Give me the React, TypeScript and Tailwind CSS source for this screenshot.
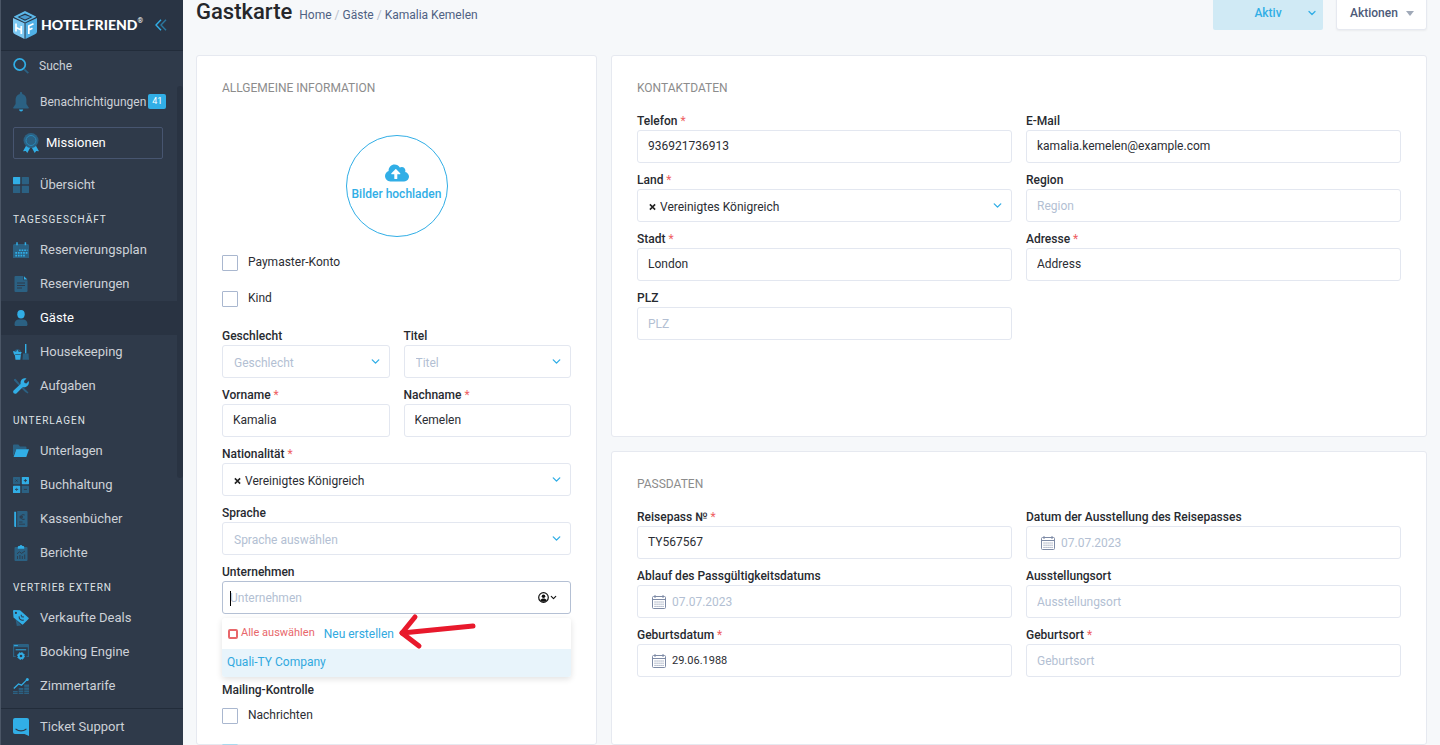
import { useState } from 'react'
import type { ReactNode } from 'react'
import { ChevronDown } from 'lucide-react'
import { FaCloudUploadAlt } from 'react-icons/fa'

const BRIGHT = '#31aee6'
const DULL = '#2b6183'
const DARK = '#2f3a4a'

const Svg = ({ children, size = 16 }: { children: ReactNode; size?: number }) => (
  <svg width={size} height={size} viewBox="0 0 16 16" fill="none" className="shrink-0" aria-hidden="true">
    {children}
  </svg>
)

const icons = {
  search: (
    <Svg>
      <path d="M11.3 11.3l4 3.9" stroke={DULL} strokeWidth="1.8" />
      <circle cx="6.7" cy="6.5" r="5.6" stroke={BRIGHT} strokeWidth="1.7" />
    </Svg>
  ),
  grid: (
    <Svg>
      <rect x="0" y="0" width="7.2" height="7.2" rx=".6" fill={BRIGHT} />
      <rect x="8.8" y="0" width="7.2" height="7.2" rx=".6" fill={DULL} />
      <rect x="0" y="8.8" width="7.2" height="7.2" rx=".6" fill={DULL} />
      <rect x="8.8" y="8.8" width="7.2" height="7.2" rx=".6" fill={DULL} />
    </Svg>
  ),
  calendar: (
    <Svg>
      <path d="M0 3.5a1.500 1.500 0 011.500-1.500h13a1.500 1.500 0 011.500 1.500V16H0z" fill={DULL} />
      <path d="M4 .3v3M12.400 .3v3" stroke={BRIGHT} strokeWidth="1.500" />
      <path d="M6 8.200h8.500M2.300 10.900h12.200M2.300 13.600h9.500" stroke={BRIGHT} strokeWidth="1.600" strokeDasharray="1.700 .9" />
    </Svg>
  ),
  file: (
    <Svg>
      <path d="M1.500 1a1 1 0 011-1h7.800v4.200h4.200V15a1 1 0 01-1 1h-11a1 1 0 01-1-1z" fill={DULL} />
      <path d="M11 .3l3.300 3.300H11z" fill={BRIGHT} />
      <path d="M4 7h8M4 9.500h8M4 12h5" stroke={DARK} strokeWidth="1" />
    </Svg>
  ),
  user: (
    <Svg>
      <path d="M1.500 14.500c0-3.300 1.900-5 4.200-5h4.600c2.300 0 4.200 1.700 4.200 5 0 .8-.5 1.500-1.300 1.500H2.800c-.8 0-1.300-.7-1.300-1.500z" fill={DULL} />
      <ellipse cx="8" cy="4.200" rx="3.700" ry="4.200" fill={BRIGHT} />
    </Svg>
  ),
  cleaning: (
    <Svg>
      <path d="M12.700 0v9.500" stroke={BRIGHT} strokeWidth="1.400" />
      <path d="M10 9.500h5.500l.5 6.200H9.500z" fill={DULL} />
      <path d="M1.500 8.800a3 3 0 016 0" stroke={DULL} strokeWidth="1.200" />
      <path d="M0 7l3 .8 1.300-2 1.600 2.100L8.700 8 8 9.800l-.7 6H2.500l-.6-4.600C.9 10.500.300 8.700 0 7z" fill={BRIGHT} />
      <path d="M2.200 10.500h5.500" stroke={DARK} strokeWidth=".6" />
    </Svg>
  ),
  tools: (
    <Svg>
      <path d="M1 1.300l1.500-.5 5 6 6.800 6.500 1.200 1.400-.8.8-2.500-1.500L1 2.500z" fill={DULL} />
      <path d="M.6 12.600l7-6.500C7 3.300 8.600.600 11.300.300c.9-.1 1.500 0 2.200.300L11 3.100l.5 1.900 1.900.5 2.300-2.400c.8 2.500-.7 5-3 5.800-1 .3-1.900.3-2.800 0L3.400 15.400c-1.900 1.500-4.300-1-2.800-2.800z" fill={BRIGHT} />
    </Svg>
  ),
  folder: (
    <Svg>
      <path d="M0 2.500a1 1 0 011-1h4.400l1.600 2h5.500a1 1 0 011 1V7H3L0 13z" fill={DULL} />
      <path d="M3.300 6.200H16l-2.700 7.800H.6z" fill={BRIGHT} />
    </Svg>
  ),
  calc: (
    <Svg>
      <rect width="7.200" height="7.200" rx=".6" fill={DULL} />
      <rect x="8.800" width="7.200" height="7.200" rx=".6" fill={BRIGHT} />
      <rect y="8.800" width="7.200" height="7.200" rx=".6" fill={BRIGHT} />
      <rect x="8.800" y="8.800" width="7.200" height="7.200" rx=".6" fill={DULL} />
      <path d="M2.600 2.600l2 2m0-2l-2 2M12.400 2v3.200M10.800 3.600H14M2 12.400h3.200M3.600 10.900v.7M3.600 13.200v.7M10.900 12.400H14" stroke={DARK} strokeWidth=".9" />
    </Svg>
  ),
  cashbook: (
    <Svg>
      <path d="M4.200 0h9.300a1 1 0 011 1v14a1 1 0 01-1 1H4.200z" fill={DULL} />
      <path d="M1.200.8h1.900V16H2.200a1 1 0 01-1-1z" fill={BRIGHT} />
      <path d="M11.700 4c-2.800-1-4 .4-4 2s1.200 3 4 2.200M6.500 5.400H10M6.500 6.700H10M6 11h3.500M6 13.200h6" stroke={DARK} strokeWidth=".9" />
    </Svg>
  ),
  report: (
    <Svg>
      <path d="M1.500 3a1 1 0 011-1h11a1 1 0 011 1v12a1 1 0 01-1 1h-11a1 1 0 01-1-1z" fill={DULL} />
      <path d="M4.800 3.700V2a1 1 0 011-1h.8a1.500 1.500 0 012.800 0h.8a1 1 0 011 1v1.700z" fill={BRIGHT} />
      <path d="M4 8.800l2.500-2 2 1.600L12 6M4.500 11v3M6.900 10v4M9.300 11v3M11.700 9.500V14" stroke={DARK} strokeWidth=".9" />
    </Svg>
  ),
  deals: (
    <Svg>
      <path d="M2.500 9L3.800 16l4.500-.5z" fill={DULL} />
      <path d="M0 1a1 1 0 011-1l6 .3 8.500 7.500a1 1 0 010 1.300l-5.300 5.200a1 1 0 01-1.400 0L.5 7.500z" fill={BRIGHT} />
      <circle cx="2.900" cy="2.900" r="1.100" fill={DARK} />
      <path d="M6.200 6.300c-.4 2.500 1.400 4.300 4.500 3.800M8.300 4.800v1.500M8.300 6.700l2.600.3" stroke={DARK} strokeWidth="1.100" />
    </Svg>
  ),
  engine: (
    <Svg>
      <path d="M0 1a1 1 0 011-1h14a1 1 0 011 1v12h-2.500V12h1.300V3.200H1.200V12h1.500v1H0z" fill={DULL} />
      <path d="M1.500 1.600h3M3 5.800h9.800" stroke={BRIGHT} strokeWidth="1" strokeLinecap="round" />
      <circle cx="8" cy="12" r="2.300" stroke={BRIGHT} strokeWidth="1.900" />
      <circle cx="8" cy="12" r="3.500" stroke={BRIGHT} strokeWidth="1" strokeDasharray="1.400 1.350" />
    </Svg>
  ),
  rates: (
    <Svg>
      <path d="M0 13h4.700v3H0zM5.700 10h4.600v6H5.700zM11.200 6.500H16V16h-4.800z" fill={DULL} />
      <path d="M0 14.500h16M5.700 12.300H16M11 9.300h5" stroke={DARK} strokeWidth=".6" />
      <path d="M.8 10.500L5.500 6l3 1.200L14 1.600" stroke={BRIGHT} strokeWidth="1.300" />
      <circle cx="14.300" cy="1.600" r="1.500" fill={BRIGHT} />
    </Svg>
  ),
}

const BellIcon = () => (
  <svg width="16" height="20" viewBox="0 0 16 20" className="shrink-0" aria-hidden="true">
    <path d="M6.800 1.200a1.200 1.200 0 012.400 0v.7c2.700.6 4.200 2.800 4.200 5.600v4.500l2.300 3.500c.4.700.2 1-.5 1H.8c-.7 0-.9-.3-.5-1L2.600 12V7.500c0-2.800 1.500-5 4.200-5.600z" fill={DULL} />
    <path d="M6 17.500h4.200c-.3 1.300-1 2-2.100 2s-1.800-.7-2.100-2z" fill={BRIGHT} />
  </svg>
)

const MedalIcon = () => (
  <svg width="16" height="20" viewBox="0 0 16 20" className="shrink-0" aria-hidden="true">
    <path d="M3.500 12L0 18.300l2.800-.2L4.300 20l3-5.600zM12.500 12l3.500 6.300-2.800-.2-1.500 1.900-3-5.600z" fill={BRIGHT} />
    <circle cx="8" cy="7.500" r="7.500" fill={DULL} />
    <circle cx="8" cy="7.500" r="5" fill={DULL} stroke="#2988b8" strokeWidth="1" />
  </svg>
)

const SupportIcon = () => (
  <svg width="16" height="18" viewBox="0 0 16 18" className="shrink-0" aria-hidden="true">
    <path d="M2 0h12a2 2 0 012 2v16l-4.500-2H2a2 2 0 01-2-2V2a2 2 0 012-2z" fill={BRIGHT} />
    <path d="M3 11.200c2.800 2.200 7.200 2.200 10 0" stroke={DARK} strokeWidth="1.100" fill="none" strokeLinecap="round" />
  </svg>
)

const LogoIcon = () => (
  <svg width="24" height="28" viewBox="0 0 24 28" className="shrink-0" aria-hidden="true">
    <path d="M12 0l11 5.500v.5l-11 5.500L1 6v-.5z" fill="#5db8e8" />
    <path d="M4.500 6L12 2.500 19.500 6 12 9.800z" fill="#243244" />
    <path d="M6.500 6L12 4l5.500 2L12 8.500z" fill="#4a9cd0" />
    <path d="M0 7l11.500 5.200V28L2 23.200a3 3 0 01-2-3z" fill="#7cc8f2" />
    <path d="M24 7l-11.500 5.200V28l9.500-4.800a3 3 0 002-3z" fill="#50b0e6" />
    <path d="M3 12.500v8M8.300 15v8M3 16.500l5.300 2.400M15.800 23v-8l4.700-2.200M15.800 19l3.700-1.700" stroke="#fff" strokeWidth="1.700" fill="none" />
  </svg>
)

const CollapseIcon = () => (
  <svg width="12" height="12" viewBox="0 0 12 12" fill="none" strokeWidth="1.400" aria-hidden="true">
    <path d="M6 .8L1 6l5 5.200" stroke={BRIGHT} />
    <path d="M11 .8L6 6l5 5.200" stroke="#2b789f" />
  </svg>
)

const DateIcon = () => (
  <svg width="14" height="14" viewBox="0 0 14 14" fill="none" stroke="#7e8ba6" className="shrink-0" aria-hidden="true">
    <rect x=".5" y="1.500" width="13" height="12" rx="1" />
    <path d="M.5 4.500h13M3 0v3M11 0v3" />
    <path d="M2.500 7h9.500M2.500 9.200h9.500M2.500 11.400h9.500" strokeDasharray="1.100 .9" />
  </svg>
)

const AccountIcon = () => (
  <svg width="11" height="11" viewBox="0 0 11 11" fill="none" aria-hidden="true">
    <circle cx="5.500" cy="5.500" r="4.800" stroke="#111" strokeWidth="1.200" />
    <circle cx="5.500" cy="4.200" r="1.800" fill="#111" />
    <path d="M2.200 8.300c1.500-2.300 5.100-2.300 6.600 0-1.700 2-4.900 2-6.600 0z" fill="#111" />
  </svg>
)

const ArrowMark = () => (
  <svg
    width="82"
    height="38"
    viewBox="0 0 82 38"
    fill="none"
    stroke="#e8192c"
    strokeWidth="5"
    strokeLinecap="round"
    strokeLinejoin="round"
    className="pointer-events-none absolute -top-1.5 left-[175px]"
    aria-hidden="true"
  >
    <path d="M76 14L5 21" />
    <path d="M18 5L5 21l17 13" />
  </svg>
)

const sections = [
  {
    title: 'Tagesgeschäft',
    items: [
      { label: 'Reservierungsplan', icon: icons.calendar },
      { label: 'Reservierungen', icon: icons.file },
      { label: 'Gäste', icon: icons.user, active: true },
      { label: 'Housekeeping', icon: icons.cleaning },
      { label: 'Aufgaben', icon: icons.tools },
    ],
  },
  {
    title: 'Unterlagen',
    items: [
      { label: 'Unterlagen', icon: icons.folder },
      { label: 'Buchhaltung', icon: icons.calc },
      { label: 'Kassenbücher', icon: icons.cashbook },
      { label: 'Berichte', icon: icons.report },
    ],
  },
  {
    title: 'Vertrieb extern',
    items: [
      { label: 'Verkaufte Deals', icon: icons.deals },
      { label: 'Booking Engine', icon: icons.engine },
      { label: 'Zimmertarife', icon: icons.rates },
    ],
  },
]

function NavItem({ label, icon, active }: { label: string; icon: ReactNode; active?: boolean }) {
  return (
    <a
      href="#"
      className={`flex h-[34px] items-center gap-[11px] pl-3 text-[13px] ${active ? 'bg-[#293342] text-white' : 'text-[#cdd1d7]'}`}
    >
      {icon}
      <span>{label}</span>
    </a>
  )
}

function Sidebar() {
  return (
    <aside className="flex w-[183px] shrink-0 flex-col border-l border-[#4b5666] bg-[#2f3a4a]">
      <div className="flex h-[51px] shrink-0 items-center border-b border-[#222c3a] bg-[#293444] pl-3">
        <LogoIcon />
        <span className="ml-1 font-['Lato',sans-serif] text-sm font-black text-white">HOTELFRIEND</span>
        <span className="mb-2 text-[7px] text-white">®</span>
        <button type="button" aria-label="Menü einklappen" className="ml-3">
          <CollapseIcon />
        </button>
      </div>
      <nav className="relative min-h-0 flex-1 overflow-hidden">
        <div className="absolute top-[35px] right-0 h-[392px] w-1.5 rounded-sm bg-[#293342]" />
        <a href="#" className="flex h-[30px] items-center gap-2.5 pl-3 text-xs text-[#cdd1d7]">
          {icons.search}
          <span>Suche</span>
        </a>
        <a href="#" className="flex h-[41px] items-center gap-[11px] pl-3 text-xs text-[#cdd1d7]">
          <BellIcon />
          <span className="flex items-center gap-0.5">
            Benachrichtigungen
            <span className="rounded-xs bg-[#31aee6] px-1 text-[9px] leading-[15px] text-white">41</span>
          </span>
        </a>
        <a
          href="#"
          className="mt-[5px] mr-5 mb-[9px] ml-3 flex h-8 items-center gap-[7px] rounded-xs border border-[#475570] pl-[9px] text-[13px] text-white"
        >
          <MedalIcon />
          <span>Missionen</span>
        </a>
        <NavItem label="Übersicht" icon={icons.grid} />
        {sections.map((section) => (
          <div key={section.title}>
            <h2 className="flex h-[31px] items-end pb-[5px] pl-3 text-[10px] leading-[17px] tracking-widest text-[#dfe2e6] uppercase">
              {section.title}
            </h2>
            {section.items.map((item) => (
              <NavItem key={item.label} {...item} />
            ))}
          </div>
        ))}
      </nav>
      <div className="h-[37px] shrink-0 border-t border-[#222c3a] pt-px">
        <NavItem label="Ticket Support" icon={<SupportIcon />} />
      </div>
    </aside>
  )
}

function Field({ id, label, required, children }: { id: string; label: string; required?: boolean; children: ReactNode }) {
  return (
    <div className="flex flex-col gap-px">
      <label htmlFor={id} className="text-xs leading-4 font-medium text-[#272a30]">
        {label}
        {required && <span className="font-normal text-[#ee5f63]"> *</span>}
      </label>
      {children}
    </div>
  )
}

function TextField({ id, label, required, value }: { id: string; label: string; required?: boolean; value?: string }) {
  return (
    <Field id={id} label={label} required={required}>
      <input
        id={id}
        type="text"
        defaultValue={value}
        placeholder={label}
        className={`h-[33px] w-full rounded-[3px] border border-[#e3e7f0] bg-white px-2.5 text-xs text-[#2b2d33] outline-none placeholder:text-[#b3bfd3] ${value ? 'pb-0.5' : ''}`}
      />
    </Field>
  )
}

function SelectField({
  id,
  label,
  required,
  placeholder,
  value,
}: {
  id: string
  label: string
  required?: boolean
  placeholder?: string
  value?: string
}) {
  return (
    <Field id={id} label={label} required={required}>
      <div className="relative flex h-[33px] items-center rounded-[3px] border border-[#e3e7f0] bg-white pt-0.5 pl-[11px] text-xs">
        {value && (
          <button type="button" aria-label="Auswahl entfernen" className="mr-1 text-[#222]">
            <svg width="7" height="8" viewBox="0 0 8 8" stroke="currentColor" strokeWidth="1.800">
              <path d="M1 1l6 6M7 1L1 7" />
            </svg>
          </button>
        )}
        <select
          id={id}
          className={`min-w-0 flex-1 appearance-none bg-transparent outline-none ${value ? 'text-[#2b2d33]' : 'text-[#b3bfd3]'}`}
        >
          <option>{value || placeholder || label}</option>
        </select>
        <ChevronDown size={13} strokeWidth={2.5} className="pointer-events-none absolute top-[9px] right-[7px] text-[#31aee6]" />
      </div>
    </Field>
  )
}

function DateField({ id, label, required, value }: { id: string; label: string; required?: boolean; value?: string }) {
  return (
    <Field id={id} label={label} required={required}>
      <div className="flex h-[33px] items-center gap-1.5 rounded-[3px] border border-[#e3e7f0] bg-white pl-3.5">
        <DateIcon />
        <input
          id={id}
          type="text"
          defaultValue={value}
          placeholder="07.07.2023"
          className={`h-full min-w-0 flex-1 bg-transparent text-[#2b2d33] outline-none placeholder:text-[#b3bfd3] ${value ? 'text-[11px]' : 'text-xs'}`}
        />
      </div>
    </Field>
  )
}

function Checkbox({ label, checked, children }: { label: string; checked?: boolean; children?: ReactNode }) {
  const [on, setOn] = useState(!!checked)
  return (
    <label className="flex h-4 gap-2.5 text-xs leading-[14px] text-[#2b2d33]">
      <input
        type="checkbox"
        aria-label={label}
        checked={on}
        onChange={() => setOn(!on)}
        className="size-4 appearance-none rounded-[1px] border border-[#a9b7cf] bg-white checked:border-[#a9d9ee] checked:bg-[#cfeaf5]"
      />
      {children}
    </label>
  )
}

function Card({ title, className, children }: { title: string; className?: string; children: ReactNode }) {
  return (
    <section className={`rounded-[3px] border border-[#e6e9f0] bg-white px-[25px] pt-6 ${className}`}>
      <h2 className="text-xs leading-4 text-[#8c8c8c] uppercase">{title}</h2>
      {children}
    </section>
  )
}

function CompanyField() {
  return (
    <div>
      <Field id="company" label="Unternehmen">
        <div className="relative flex h-[33px] items-center rounded-[3px] border border-[#b4c0d4] bg-white pr-3 pl-[7px]">
          <span className="absolute top-[9px] left-[7px] h-[15px] w-px bg-black" />
          <input
            id="company"
            type="text"
            placeholder="Unternehmen"
            className="min-w-0 flex-1 bg-transparent text-xs text-[#2b2d33] outline-none placeholder:text-[#b3bfd3]"
          />
          <button type="button" aria-label="Unternehmen öffnen" className="flex items-center text-[#111]">
            <AccountIcon />
            <ChevronDown size={9} strokeWidth={3} />
          </button>
        </div>
      </Field>
      <div className="relative mt-1 rounded-[3px] bg-white text-xs shadow-[0_2px_6px_rgba(0,0,0,0.12)]">
        <div className="flex h-[31px] items-center gap-[9px] pl-1.5">
          <label className="flex items-center gap-[3px] text-[11px] text-[#e8676b]">
            <input type="checkbox" className="size-2.5 appearance-none rounded-xs border-2 border-[#e8676b]" />
            Alle auswählen
          </label>
          <button type="button" className="text-[#31a9df]">Neu erstellen</button>
        </div>
        <button type="button" className="block h-7 w-full rounded-b-[3px] bg-[#e8f4fb] pb-0.5 pl-[5px] text-left text-[#31a9df]">
          Quali-TY Company
        </button>
        <ArrowMark />
      </div>
    </div>
  )
}

export default function App() {
  return (
    <div className="flex h-screen overflow-hidden bg-[#f6f8fa] font-['Roboto','Liberation_Sans',sans-serif]">
      <Sidebar />
      <main className="flex min-w-0 flex-1 flex-col overflow-hidden px-[13px]">
        <header className="-mt-1 flex h-[34px] shrink-0 items-center">
          <h1 className="pb-0.5 text-[22px] leading-7 font-medium text-[#25272b]">Gastkarte</h1>
          <nav className="ml-[7px] flex gap-[3px] pt-[3px] text-xs text-[#4f6183]">
            <a href="#">Home</a>
            <span className="text-[#b9c0cc]">/</span>
            <a href="#">Gäste</a>
            <span className="text-[#b9c0cc]">/</span>
            <a href="#">Kamalia Kemelen</a>
          </nav>
          <div className="relative ml-auto h-full w-[110px]">
            <select
              aria-label="Status"
              className="h-full w-full appearance-none rounded-xs bg-[#d0eaf5] text-center text-xs font-medium text-[#31aee6] outline-none"
            >
              <option>Aktiv</option>
            </select>
            <ChevronDown size={12} strokeWidth={2.5} className="pointer-events-none absolute top-[11px] right-[5px] text-[#31aee6]" />
          </div>
          <button
            type="button"
            className="ml-[13px] flex h-full w-[91px] items-center gap-2 rounded-[3px] border border-[#e6e9f0] bg-white pl-[13px] text-xs font-medium text-[#4c5a78] shadow-xs"
          >
            Aktionen
            <span className="border-x-4 border-t-5 border-x-transparent border-t-[#a0a9b8]" />
          </button>
        </header>

        <div className="mt-[25px] flex min-h-0 flex-1 gap-3.5">
          <Card title="Allgemeine Information" className="w-[401px] shrink-0">
            <button
              type="button"
              className="mx-auto mt-[39px] flex size-[102px] flex-col items-center rounded-full border border-[#31aee6] pt-[25px] text-xs leading-[18px] font-medium text-[#31aee6]"
            >
              <FaCloudUploadAlt size={24} />
              <span className="whitespace-nowrap">Bilder hochladen</span>
            </button>
            <div className="mt-[18px] flex flex-col gap-5">
              <Checkbox label="Paymaster-Konto">Paymaster-Konto</Checkbox>
              <Checkbox label="Kind">Kind</Checkbox>
            </div>
            <div className="mt-[21px] flex flex-col gap-[9px]">
              <div className="grid grid-cols-2 gap-x-3.5 gap-y-[9px]">
                <SelectField id="gender" label="Geschlecht" />
                <SelectField id="title" label="Titel" />
                <TextField id="firstName" label="Vorname" required value="Kamalia" />
                <TextField id="lastName" label="Nachname" required value="Kemelen" />
              </div>
              <SelectField id="nationality" label="Nationalität" required value="Vereinigtes Königreich" />
              <SelectField id="language" label="Sprache" placeholder="Sprache auswählen" />
              <CompanyField />
            </div>
            <fieldset className="mt-[5px]">
              <legend className="text-xs leading-4 font-medium text-[#272a30]">Mailing-Kontrolle</legend>
              <div className="flex flex-col gap-5 pt-2.5">
                <Checkbox label="Nachrichten">Nachrichten</Checkbox>
                <Checkbox label="Newsletter" checked />
              </div>
            </fieldset>
          </Card>

          <div className="flex min-w-0 flex-1 flex-col gap-3.5">
            <Card title="Kontaktdaten" className="shrink-0 pb-24">
              <div className="mt-[17px] grid grid-cols-2 gap-x-3.5 gap-y-[9px]">
                <TextField id="phone" label="Telefon" required value="936921736913" />
                <TextField id="email" label="E-Mail" value="kamalia.kemelen@example.com" />
                <SelectField id="country" label="Land" required value="Vereinigtes Königreich" />
                <TextField id="region" label="Region" />
                <TextField id="city" label="Stadt" required value="London" />
                <TextField id="address" label="Adresse" required value="Address" />
                <TextField id="zip" label="PLZ" />
              </div>
            </Card>
            <Card title="Passdaten" className="flex-1">
              <div className="mt-[17px] grid grid-cols-2 gap-x-3.5 gap-y-[9px]">
                <TextField id="passport" label="Reisepass №" required value="TY567567" />
                <DateField id="issued" label="Datum der Ausstellung des Reisepasses" />
                <DateField id="expires" label="Ablauf des Passgültigkeitsdatums" />
                <TextField id="issuePlace" label="Ausstellungsort" />
                <DateField id="birthDate" label="Geburtsdatum" required value="29.06.1988" />
                <TextField id="birthPlace" label="Geburtsort" required />
              </div>
            </Card>
          </div>
        </div>
      </main>
    </div>
  )
}
